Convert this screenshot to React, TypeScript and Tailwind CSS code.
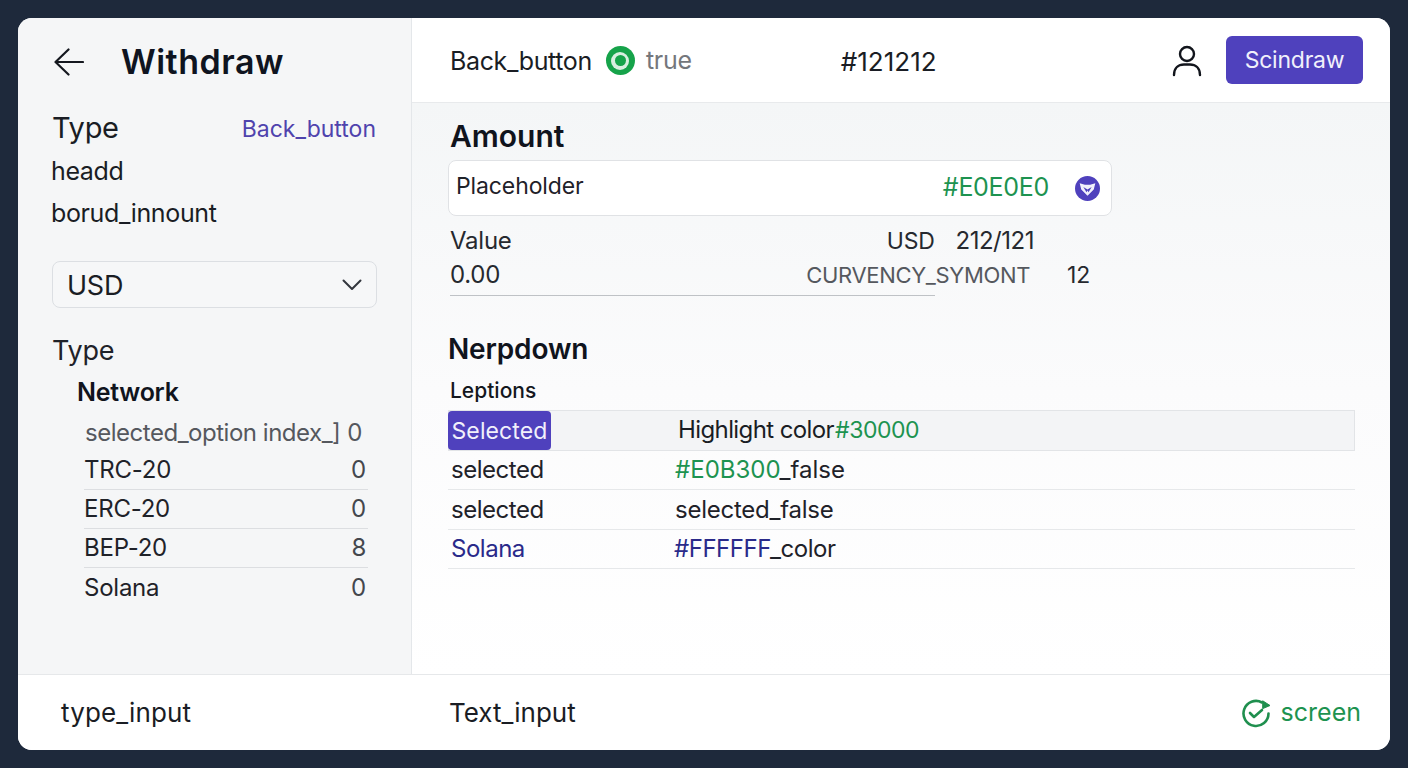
const NETWORKS = [
  { name: 'TRC-20', count: '0' },
  { name: 'ERC-20', count: '0' },
  { name: 'BEP-20', count: '8' },
  { name: 'Solana', count: '0' },
];

function Sidebar() {
  return (
    <aside className="w-[394px] shrink-0 border-r border-[#e4e7ea] bg-[#f5f6f7] pl-[33px] pr-[34px]">
      <div className="flex h-[88px] items-center">
        <svg viewBox="0 0 30 28" className="ml-[3px] h-[28px] w-[30px]" fill="none" stroke="#15181f" strokeWidth="2.2" strokeLinecap="round" strokeLinejoin="round">
          <path d="M29 14 H2" />
          <path d="M14.5 1.5 L1.5 14 L14.5 26.5" />
        </svg>
        <h1 className="ml-[37px] text-[34px] font-semibold leading-none tracking-[0.015em] text-[#0f1420]">Withdraw</h1>
      </div>
      <div className="mt-[2px] flex h-[40px] items-center justify-between">
        <span className="ml-[1px] text-[29px] tracking-[-0.01em] text-[#1a1d24]">Type</span>
        <span className="mr-[1px] mt-[2px] text-[23px] text-[#4f43ad]">Back_button</span>
      </div>
      <div className="mt-[2px] text-[25px] leading-[42px] tracking-[-0.015em] text-[#1a1d24]">
        <div>headd</div>
        <div>borud_innount</div>
      </div>
      <div className="ml-[1px] mt-[27px] flex h-[47px] w-[325px] items-center justify-between rounded-[8px] border border-[#dcdfe3] bg-[#f6f7f8] pl-[14px] pr-[14px]">
        <span className="mt-[3px] text-[27px] tracking-[-0.01em] text-[#1a1d24]">USD</span>
        <svg viewBox="0 0 20 12" className="h-[12px] w-[20px]" fill="none" stroke="#33373e" strokeWidth="2" strokeLinecap="round" strokeLinejoin="round">
          <path d="M1.5 1.5 L10 10 L18.5 1.5" />
        </svg>
      </div>
      <div className="ml-[1px] mt-[25px] text-[27px] leading-[36px] tracking-[-0.01em] text-[#1f2229]">Type</div>
      <div className="ml-[26px] mt-[8px] text-[25px] font-semibold leading-[30px] tracking-[-0.01em] text-[#10141d]">Network</div>
      <div className="ml-[34px] mt-[7px] flex h-[37px] w-[277px] items-center justify-between whitespace-nowrap text-[24px] tracking-[-0.02em] text-[#55585e]">
        <span>selected_option index_]</span>
        <span>0</span>
      </div>
      <div className="ml-[33px] w-[284px]">
        {NETWORKS.map((item, i) => (
          <div
            key={item.name}
            className={`flex h-[39px] items-center justify-between pr-[2px] text-[24px] tracking-[-0.01em] text-[#1f2229] ${i < 3 ? 'border-b border-[#dcdee1]' : ''}`}
          >
            <span>{item.name}</span>
            <span className="text-[#44474d]">{item.count}</span>
          </div>
        ))}
      </div>
    </aside>
  );
}

function TopBar() {
  return (
    <header className="flex h-[85px] shrink-0 items-center border-b border-[#e8eaec] bg-white pl-[38px] pr-[27px]">
      <span className="mt-[3px] text-[25px] tracking-[-0.015em] text-[#1a1d24]">Back_button</span>
      <span className="ml-[14px] mt-[1px] flex h-[29px] w-[29px] items-center justify-center rounded-full bg-[#16a34a]">
        <span className="flex h-[18px] w-[18px] items-center justify-center rounded-full bg-[#d8efe0]">
          <span className="h-[11px] w-[11px] rounded-full bg-[#16a34a]" />
        </span>
      </span>
      <span className="ml-[11px] mt-[2px] text-[25px] tracking-[-0.01em] text-[#74777c]">true</span>
      <span className="ml-[149px] mt-[2px] text-[26px] text-[#1a1d24]">#121212</span>
      <svg viewBox="0 0 30 32" className="ml-auto mt-[2px] h-[32px] w-[30px]" fill="none" stroke="#12151c" strokeWidth="2.4" strokeLinecap="round">
        <circle cx="15" cy="9" r="7" />
        <path d="M2 30 C2 23 6.5 19.5 12 19.5 H18 C23.5 19.5 28 23 28 30" />
      </svg>
      <button className="ml-[24px] h-[48px] w-[137px] rounded-[6px] bg-[#4f41bd] text-[23px] tracking-[-0.01em] text-[#f1f0fb]">Scindraw</button>
    </header>
  );
}

function AmountSection() {
  return (
    <section>
      <h2 className="ml-[38px] mt-[13px] text-[30px] font-semibold leading-[40px] text-[#10141d]">Amount</h2>
      <div className="ml-[36px] mt-[4px] flex h-[56px] w-[664px] items-center justify-between rounded-[8px] border border-[#e0e2e5] bg-white pl-[7px] pr-[11px]">
        <span className="-mt-[3px] text-[23px] tracking-[-0.005em] text-[#1f2229]">Placeholder</span>
        <span className="flex items-center">
          <span className="text-[25px] tracking-[-0.012em] text-[#1d9350]">#E0E0E0</span>
          <svg viewBox="0 0 24 24" className="ml-[26px] h-[25px] w-[25px]">
            <circle cx="12" cy="12" r="12" fill="#4f41bd" />
            <path d="M4.5 7 L9.5 8.5 H14.5 L19.5 7 L18 13 L12 19 L6 13 Z" fill="#f1f0fb" />
            <path d="M8 10.5 L12 13 L16 10.5 L13 15.5 L12 13.8 L11 15.5 Z" fill="#4f41bd" />
          </svg>
        </span>
      </div>
      <div className="ml-[38px] mt-[8px] flex h-[34px] w-[584px] items-center text-[24px] tracking-[-0.01em] text-[#26292f]">
        <span>Value</span>
        <span className="ml-auto mr-[21px] text-[23px]">USD</span>
        <span className="text-[24px] tracking-[-0.02em]">212/121</span>
      </div>
      <div className="ml-[38px] flex h-[34px] w-[640px] items-center text-[#26292f]">
        <span className="text-[24px] tracking-[-0.01em]">0.00</span>
        <span className="ml-auto text-[22px] tracking-[-0.015em] text-[#55585e]">CURVENCY_SYMONT</span>
        <span className="ml-[37px] text-[23px] tracking-[-0.01em]">12</span>
      </div>
      <div className="ml-[38px] mt-[3px] h-px w-[485px] bg-[#bfc2c6]" />
    </section>
  );
}

function DropdownSection() {
  return (
    <section className="ml-[36px] mr-[35px]">
      <h2 className="mt-[33px] text-[28px] font-semibold leading-[40px] tracking-[-0.005em] text-[#10141d]">Nerpdown</h2>
      <div className="ml-[2px] mt-[5px] text-[21px] font-medium leading-[34px] text-[#14171e]">Leptions</div>
      <div className="mt-[2px] flex h-[41px] items-start border border-[#e2e4e7] bg-[#f3f4f6] text-[23px] leading-[38px] text-[#1a1d24]">
        <span className="-ml-[1px] flex h-[39px] w-[103px] items-center justify-center rounded-[4px] bg-[#4f41bd] tracking-[0.005em] text-[#f1f0fb]">Selected</span>
        <span className="ml-[127px] text-[24px] tracking-[-0.025em]">Highlight color</span>
        <span className="ml-[1px] text-[23px] tracking-[-0.02em] text-[#1d9350]">#30000</span>
      </div>
      <div className="flex h-[39px] items-center border-b border-[#e6e8ea] text-[24px] text-[#1f2229]">
        <span className="ml-[3px] w-[224px] tracking-[-0.02em]">selected</span>
        <span>
          <span className="text-[#1d9350]">#E0B300</span>_false
        </span>
      </div>
      <div className="flex h-[40px] items-center border-b border-[#e6e8ea] text-[24px] tracking-[-0.01em] text-[#1f2229]">
        <span className="ml-[3px] w-[224px] tracking-[-0.02em]">selected</span>
        <span>selected_false</span>
      </div>
      <div className="flex h-[39px] items-center border-b border-[#e6e8ea] text-[24px] tracking-[-0.02em] text-[#1f2229]">
        <span className="ml-[3px] w-[223px] text-[#2a2a8a]">Solana</span>
        <span>
          <span className="text-[#2a2a8a]">#FFFFFF</span>_color
        </span>
      </div>
    </section>
  );
}

function Footer() {
  return (
    <footer className="flex h-[76px] shrink-0 items-center border-t border-[#e6e8ea] bg-white pr-[29px] text-[26px] text-[#1a1d24]">
      <span className="ml-[43px] w-[388px] tracking-[0.005em]">type_input</span>
      <span>Text_input</span>
      <span className="ml-auto flex items-center text-[25px] text-[#1d9350]">
        <svg viewBox="0 0 30 30" className="h-[30px] w-[30px]" fill="none" stroke="#1f8f4e" strokeWidth="2.6" strokeLinecap="round" strokeLinejoin="round">
          <path d="M21 4.5 A12.5 12.5 0 1 0 27.5 15.5" />
          <path d="M9 15 L13 19 L21 12" />
          <path d="M22 3 L29 7.5 L22 10.5 Z" fill="#1f8f4e" strokeWidth="1" />
        </svg>
        <span className="ml-[10px]">screen</span>
      </span>
    </footer>
  );
}

export default function App() {
  return (
    <div className="h-[768px] w-[1408px] bg-[#1e293b] p-[18px] font-['Inter',sans-serif]">
      <div className="flex h-[732px] w-[1372px] flex-col overflow-hidden rounded-[14px] bg-white">
        <div className="flex min-h-0 flex-1">
          <Sidebar />
          <main className="flex min-w-0 flex-1 flex-col">
            <TopBar />
            <div className="flex-1 bg-gradient-to-b from-[#f4f6f7] via-[#fbfbfc] to-white">
              <AmountSection />
              <DropdownSection />
            </div>
          </main>
        </div>
        <Footer />
      </div>
    </div>
  );
}
